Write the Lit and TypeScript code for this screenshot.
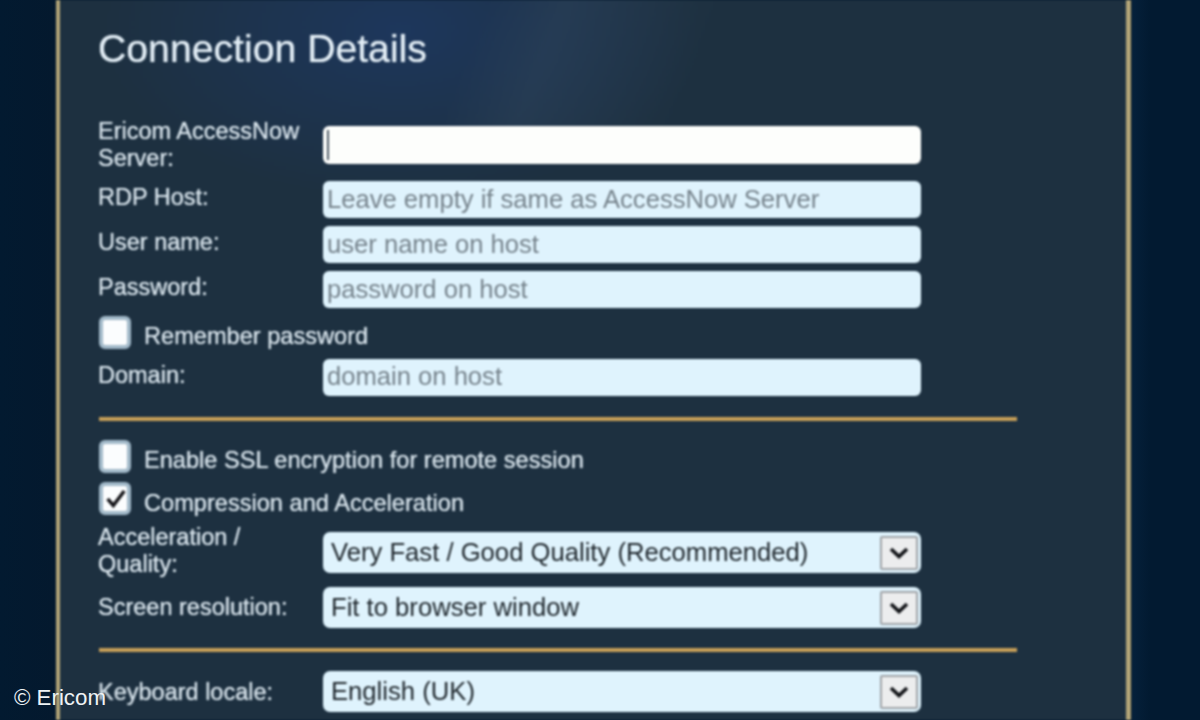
import { LitElement, html, css } from "lit";
import { customElement } from "lit/decorators.js";

const chevron = html`<svg class="chev" viewBox="0 0 20 12" aria-hidden="true"><path d="M2 2 L10 9.5 L18 2" fill="none" stroke="#101216" stroke-width="3.6"/></svg>`;
const tick = html`<svg class="tick" viewBox="0 0 24 24" aria-hidden="true"><path d="M3 12.5 L9.5 20 L22 3.5" fill="none" stroke="#141418" stroke-width="4"/></svg>`;

@customElement("app-root")
export class AppRoot extends LitElement {
  static styles = css`
    :host {
      display: block;
      position: relative;
      width: 1200px;
      height: 720px;
      overflow: hidden;
      background: linear-gradient(90deg, #021a30 0, #04192e 56px, #04192e 1131px, #05203a 1133px, #021a31 1150px, #021a31 1200px);
      font-family: "Liberation Sans", Arial, sans-serif;
    }
    .panel {
      box-sizing: border-box;
      width: 1075px;
      height: 720px;
      margin-left: 56px;
      padding-left: 38px;
      border-left: 4px solid #b3a578;
      border-right: 5px solid #b3a578;
      background:
        linear-gradient(112deg, rgba(70, 92, 112, 0) 400px, rgba(70, 92, 112, 0.2) 470px, rgba(70, 92, 112, 0.08) 560px, rgba(70, 92, 112, 0) 620px) 0 0 / 100% 127px no-repeat,
        radial-gradient(ellipse 300px 170px at 340px 30px, rgba(30, 58, 104, 0.7), rgba(30, 58, 104, 0) 100%),
        #1d3040;
      filter: blur(0.8px);
    }
    h1 {
      margin: 0;
      height: 118px;
      padding-top: 26px;
      box-sizing: border-box;
      font-size: 39.2px;
      line-height: 46px;
      font-weight: 400;
      color: #e2edf5;
      text-shadow: 0 0 1px #e2edf5;
    }
    .group {
      display: flex;
      flex-direction: column;
      gap: 8px;
    }
    .row {
      display: grid;
      grid-template-columns: 225px 598px;
      align-items: center;
      height: 37px;
    }
    .row.tall { box-sizing: border-box; height: 55px; padding-bottom: 1px; }
    .row.sel { height: 41px; }
    .row.accel { height: 56px; align-items: start; }
    .lab {
      font-size: 23.5px;
      line-height: 27px;
      color: #d6e2ea;
      text-shadow: 0 0 1px #d6e2ea;
    }
    .row .up { padding-bottom: 4px; }
    .row .low { padding-top: 1px; }
    .field {
      box-sizing: border-box;
      height: 37px;
      padding-left: 4px;
      border-radius: 6px;
      background: #dff3fd;
      color: #76838c;
      font-size: 25.6px;
      line-height: 37px;
      white-space: nowrap;
    }
    .field.domain { line-height: 34px; }
    .field.focus {
      height: 38px;
      background: #fdfefc;
      display: flex;
      align-items: center;
    }
    .caret {
      width: 2px;
      height: 30px;
      background: #4c5a66;
    }
    .select {
      box-sizing: border-box;
      height: 41px;
      display: flex;
      align-items: center;
      justify-content: space-between;
      padding: 0 3px 0 8px;
      border-radius: 7px;
      background: #dff3fd;
      color: #20282e;
      font-size: 25.65px;
      white-space: nowrap;
    }
    .row.accel .select { margin-top: 8px; }
    .btn {
      box-sizing: border-box;
      width: 38px;
      height: 34px;
      display: flex;
      align-items: center;
      justify-content: center;
      background: #ecedee;
      border: 2px solid #a0a4a8;
      border-radius: 2px;
    }
    .chev { width: 20px; height: 12px; }
    .check {
      display: flex;
      align-items: center;
      gap: 13px;
      height: 35px;
      color: #d6e2ea;
      text-shadow: 0 0 1px #d6e2ea;
      font-size: 23.6px;
    }
    .check .txt { padding-top: 6px; }
    .check .txt.lower { padding-top: 8px; }
    .box {
      box-sizing: border-box;
      flex: none;
      width: 32px;
      height: 33px;
      margin: -2px 0 0 1px;
      display: flex;
      align-items: center;
      justify-content: center;
      background: #fbfdfe;
      border: 4px solid #a2b9c9;
      border-radius: 6px;
    }
    .tick { width: 21px; height: 21px; }
    .rule {
      width: 918px;
      height: 4px;
      margin-left: 1px;
      background: #c79f58;
    }
    .r1 { margin-top: 21px; margin-bottom: 19px; }
    .r2 { margin-top: 20px; margin-bottom: 19px; }
    .s2 { gap: 7px; }
    .credit {
      position: absolute;
      left: 14px;
      top: 685px;
      font-size: 22.3px;
      line-height: 26px;
      color: #eef2f5;
    }
  `;

  render() {
    return html`
      <div class="panel">
        <h1>Connection Details</h1>
        <div class="group">
          <div class="row tall"><div class="lab">Ericom AccessNow Server:</div><div class="field focus"><span class="caret"></span></div></div>
          <div class="row"><div class="lab up">RDP Host:</div><div class="field">Leave empty if same as AccessNow Server</div></div>
          <div class="row"><div class="lab up">User name:</div><div class="field">user name on host</div></div>
          <div class="row"><div class="lab up">Password:</div><div class="field">password on host</div></div>
          <div class="check"><span class="box"></span><span class="txt">Remember password</span></div>
          <div class="row"><div class="lab up">Domain:</div><div class="field domain">domain on host</div></div>
        </div>
        <div class="rule r1"></div>
        <div class="group s2">
          <div class="check"><span class="box"></span><span class="txt">Enable SSL encryption for remote session</span></div>
          <div class="check"><span class="box">${tick}</span><span class="txt lower">Compression and Acceleration</span></div>
          <div class="row accel"><div class="lab">Acceleration /<br />Quality:</div><div class="select">Very Fast / Good Quality (Recommended)<span class="btn">${chevron}</span></div></div>
          <div class="row sel"><div class="lab">Screen resolution:</div><div class="select">Fit to browser window<span class="btn">${chevron}</span></div></div>
        </div>
        <div class="rule r2"></div>
        <div class="row sel"><div class="lab low">Keyboard locale:</div><div class="select">English (UK)<span class="btn">${chevron}</span></div></div>
      </div>
      <div class="credit">© Ericom</div>
    `;
  }
}
